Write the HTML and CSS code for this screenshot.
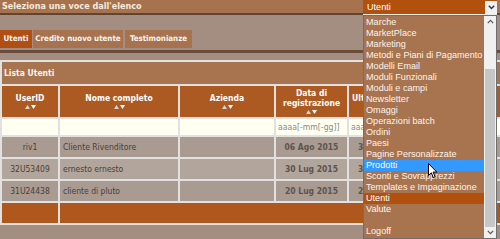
FILE: index.html
```html
<!DOCTYPE html>
<html lang="it">
<head>
<meta charset="utf-8">
<title>Utenti</title>
<link rel="stylesheet" href="styles.css">
</head>
<body>
<div class="topbar">Seleziona una voce dall'elenco</div>
<div class="tabs-wrap">
  <div class="tabs">
    <span class="tab active t1">Utenti</span>
    <span class="tab t2">Credito nuovo utente</span>
    <span class="tab t3">Testimonianze</span>
  </div>
</div>
<table class="grid">
  <colgroup>
    <col class="c1"><col class="c2"><col class="c3"><col class="c4"><col class="c5"><col class="c6"><col class="c7">
  </colgroup>
  <tr><td class="caption" colspan="7">Lista Utenti</td></tr>
  <tr class="head">
    <th>UserID<span class="sort"><svg width="11" height="4" viewBox="0 0 11 4"><path d="M0 4 L2.5 0 L5 4Z" fill="#d9d2cc"/><path d="M6 0 L11 0 L8.5 4Z" fill="#fff"/></svg></span></th>
    <th>Nome completo<span class="sort"><svg width="11" height="4" viewBox="0 0 11 4"><path d="M0 4 L2.5 0 L5 4Z" fill="#d9d2cc"/><path d="M6 0 L11 0 L8.5 4Z" fill="#fff"/></svg></span></th>
    <th>Azienda<span class="sort"><svg width="11" height="4" viewBox="0 0 11 4"><path d="M0 4 L2.5 0 L5 4Z" fill="#d9d2cc"/><path d="M6 0 L11 0 L8.5 4Z" fill="#fff"/></svg></span></th>
    <th>Data di registrazione<span class="sort"><svg width="11" height="4" viewBox="0 0 11 4"><path d="M0 4 L2.5 0 L5 4Z" fill="#d9d2cc"/><path d="M6 0 L11 0 L8.5 4Z" fill="#fff"/></svg></span></th>
    <th>Ultimo accesso<span class="sort"><svg width="11" height="4" viewBox="0 0 11 4"><path d="M0 4 L2.5 0 L5 4Z" fill="#d9d2cc"/><path d="M6 0 L11 0 L8.5 4Z" fill="#fff"/></svg></span></th>
    <th><span class="sort"><svg width="11" height="4" viewBox="0 0 11 4"><path d="M0 4 L2.5 0 L5 4Z" fill="#d9d2cc"/><path d="M6 0 L11 0 L8.5 4Z" fill="#fff"/></svg></span></th>
    <th></th>
  </tr>
  <tr class="filter">
    <td></td><td></td><td></td>
    <td><span class="ph">aaaa[-mm[-gg]]</span></td>
    <td><span class="ph">aaaa[-mm[-gg]]</span></td>
    <td></td><td></td>
  </tr>
  <tr class="row odd">
    <td class="center">riv1</td><td>Cliente Rivenditore</td><td></td>
    <td class="date">06 Ago 2015</td><td class="date">30 Lug 2015</td><td></td><td></td>
  </tr>
  <tr class="row even">
    <td class="center">32U53409</td><td>ernesto ernesto</td><td></td>
    <td class="date">30 Lug 2015</td><td class="date">30 Lug 2015</td><td></td><td></td>
  </tr>
  <tr class="row odd">
    <td class="center">31U24438</td><td>cliente di pluto</td><td></td>
    <td class="date">20 Lug 2015</td><td class="date">20 Lug 2015</td><td></td><td></td>
  </tr>
  <tr class="foot"><td></td><td colspan="6"></td></tr>
</table>

<div class="dd">
  <div class="dd-box">
    <span class="dd-value">Utenti</span>
    <span class="dd-btn"><svg width="7" height="5" viewBox="0 0 7 5"><path d="M0.8 0.8 L3.5 3.6 L6.2 0.8" fill="none" stroke="#333" stroke-width="1.4"/></svg></span>
  </div>
  <div class="dd-list">
    <div class="dd-items">
      <div class="opt first">Lingue</div>
      <div class="opt">Marche</div>
      <div class="opt">MarketPlace</div>
      <div class="opt">Marketing</div>
      <div class="opt">Metodi e Piani di Pagamento</div>
      <div class="opt">Modelli Email</div>
      <div class="opt">Moduli Funzionali</div>
      <div class="opt">Moduli e campi</div>
      <div class="opt">Newsletter</div>
      <div class="opt">Omaggi</div>
      <div class="opt">Operazioni batch</div>
      <div class="opt">Ordini</div>
      <div class="opt">Paesi</div>
      <div class="opt">Pagine Personalizzate</div>
      <div class="opt hover">Prodotti</div>
      <div class="opt">Sconti e Sovrapprezzi</div>
      <div class="opt">Templates e Impaginazione</div>
      <div class="opt selected">Utenti</div>
      <div class="opt">Valute</div>
      <div class="opt">&nbsp;</div>
      <div class="opt">Logoff</div>
    </div>
    <div class="dd-scroll">
      <span class="arrow"><svg width="7" height="5" viewBox="0 0 7 5"><path d="M0.8 4.2 L3.5 1.4 L6.2 4.2" fill="none" stroke="#555" stroke-width="1.2"/></svg></span>
      <span class="track"><span class="thumb"></span></span>
      <span class="arrow"><svg width="7" height="5" viewBox="0 0 7 5"><path d="M0.8 0.8 L3.5 3.6 L6.2 0.8" fill="none" stroke="#555" stroke-width="1.2"/></svg></span>
    </div>
  </div>
  <svg class="cursor" width="10" height="16" viewBox="0 0 10 16"><path d="M0.5 0.5 L0.5 12.5 L3.3 9.8 L5.3 14.6 L7.1 13.8 L5.1 9.1 L8.8 9.1 Z" fill="#fff" stroke="#000" stroke-width="1"/></svg>
</div>
</body>
</html>
```
FILE: styles.css
```css
html, body {
  margin: 0;
  padding: 0;
}
body {
  width: 500px;
  height: 239px;
  overflow: hidden;
  position: relative;
  background: #a48d81;
  font-family: "DejaVu Sans Condensed", "DejaVu Sans", sans-serif;
}
.topbar {
  height: 13px;
  line-height: 13px;
  padding-left: 2px;
  background: #a7734f;
  border-bottom: 2px solid #5f4434;
  color: #f6e9dd;
  font-weight: bold;
  font-size: 9px;
}
.tabs-wrap {
  padding-top: 15px;
  padding-bottom: 2px;
  border-bottom: 3px solid #6b4b39;
  margin-bottom: 7px;
}
.tabs {
  display: flex;
  gap: 1px;
  height: 18px;
}
.tab {
  line-height: 18px;
  font-size: 7.9px;
  font-weight: bold;
  color: #fbf3ec;
  background: #a6724f;
  text-align: center;
  white-space: nowrap;
}
.t1 { width: 32px; }
.t2 { width: 90px; }
.t3 { width: 67px; margin-left: 1px; }
.tab.active {
  background: #b04f14;
}
.grid {
  border-spacing: 2px;
  background: #e3e1df;
  table-layout: fixed;
  width: 562px;
  font-size: 8.5px;
}
.c1 { width: 56px; }
.c2 { width: 118px; }
.c3 { width: 94px; }
.c4 { width: 71px; }
.c5 { width: 71px; }
.c6 { width: 72px; }
.c7 { width: 64px; }
.grid td, .grid th {
  padding: 0;
}
.caption {
  height: 22px;
  padding: 0 2px !important;
  background: #a87450;
  color: #fbf3ec;
  font-weight: bold;
}
.head th {
  height: 31px;
  background: #ad5a22;
  color: #fff;
  font-weight: bold;
  line-height: 10px;
  vertical-align: middle;
  text-align: center;
}
.sort {
  display: block;
  height: 5px;
  margin-top: 2px;
}
.sort svg {
  display: block;
  margin: 0 auto;
}
.filter td {
  height: 16px;
  background: #fffff2;
}
.ph {
  padding-left: 2px;
  color: #8a8a8a;
  font-size: 8.6px;
  white-space: nowrap;
}
.row td {
  height: 20px;
  padding: 0 3px;
  color: #4a3f38;
  white-space: nowrap;
  overflow: hidden;
}
.row.odd td { background: #a99b92; }
.row.even td { background: #b2a59c; }
.row td.center { text-align: center; }
.row td.date {
  text-align: center;
  font-weight: bold;
  color: #5e544d;
}
.foot td {
  height: 20px;
  background: #b0571e;
}

/* dropdown overlay */
.dd {
  position: absolute;
  left: 363px;
  top: 0;
  width: 134px;
  font-family: "Liberation Sans", Arial, sans-serif;
  font-size: 9.1px;
}
.dd-box {
  height: 14px;
  display: flex;
  align-items: center;
  justify-content: space-between;
  background: #b2500e;
  border-bottom: 1px solid #f2ece6;
  color: #fff;
}
.dd-value {
  padding-left: 4px;
}
.dd-btn {
  width: 12px;
  height: 13px;
  display: flex;
  align-items: center;
  justify-content: center;
  background: #eef1f5;
}
.dd-list {
  height: 222px;
  border: 1px solid #6e6e6e;
  display: flex;
  background: #a87450;
  overflow: hidden;
}
.dd-items {
  flex: 1;
  overflow: hidden;
}
.opt {
  height: 11px;
  line-height: 11px;
  padding-left: 2px;
  color: #fbf3ec;
  white-space: nowrap;
}
.opt.first {
  margin-top: -10px;
}
.opt.hover {
  background: #3399ff;
  color: #fff;
}
.opt.selected {
  background: #b2500e;
  color: #fff;
}
.dd-scroll {
  width: 12px;
  display: flex;
  flex-direction: column;
  background: #f0f0f0;
}
.arrow {
  height: 11px;
  display: flex;
  align-items: center;
  justify-content: center;
}
.track {
  flex: 1;
  display: flex;
  flex-direction: column;
  justify-content: flex-end;
  padding: 0 1px;
}
.thumb {
  height: 158px;
  background: #c6c6c6;
}
.cursor {
  position: absolute;
  left: 65px;
  top: 163px;
}
```
